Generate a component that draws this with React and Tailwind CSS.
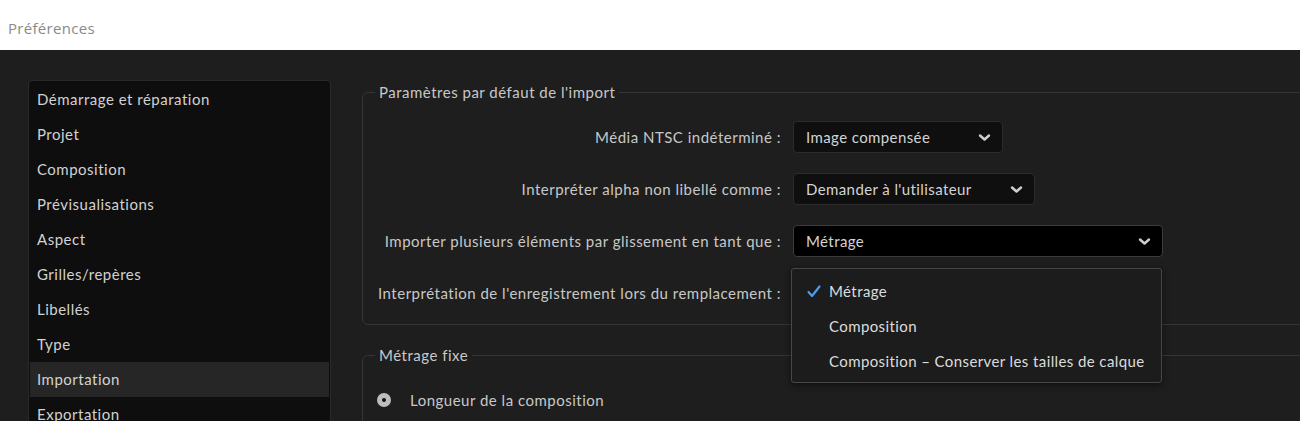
import React from "react";

const font = { fontFamily: '"Lato", "Open Sans", sans-serif' };

function Chevron() {
  return (
    <svg width="13" height="9" viewBox="0 0 13 9" className="shrink-0">
      <path d="M2 2.5 L6.5 6.5 L11 2.5" fill="none" stroke="#d0d0d0" strokeWidth="2.4" strokeLinecap="round" strokeLinejoin="round" />
    </svg>
  );
}

function Select({ value, width, active }) {
  return (
    <div
      className={
        "h-[32px] rounded-[4px] border flex items-center justify-between pl-[12px] pr-[11px] text-[15px] tracking-[0.4px] text-[#d4d4d4] " +
        (active ? "bg-black border-[#3c3c3c]" : "bg-[#0f0f0f] border-[#2c2c2c]")
      }
      style={{ width }}
    >
      <span>{value}</span>
      <Chevron />
    </div>
  );
}

const items = [
  "Démarrage et réparation",
  "Projet",
  "Composition",
  "Prévisualisations",
  "Aspect",
  "Grilles/repères",
  "Libellés",
  "Type",
  "Importation",
  "Exportation",
];

export default function App() {
  return (
    <div className="w-[1300px] h-[421px] overflow-hidden flex flex-col" style={font}>
      <div className="h-[50px] bg-white flex items-center pl-[8px] pt-[6px] shrink-0">
        <span className="text-[15px] tracking-[0.3px] text-[#8a8a8a]" style={{ fontFamily: '"Open Sans", sans-serif' }}>Préférences</span>
      </div>
      <div className="flex-1 bg-[#1e1e1e] flex pt-[30px] pl-[28px] gap-[31px]">
        <div className="w-[303px] shrink-0 h-[400px] bg-[#0e0e0e] border border-[#2a2a2a] rounded-[4px] px-[1px] pt-[0.5px]">
          {items.map((it) => (
            <div
              key={it}
              className={
                "h-[35px] flex items-center pl-[7px] text-[15px] tracking-[0.5px] text-[#d2d2d2] " +
                (it === "Importation" ? "bg-[#262626]" : "")
              }
            >
              {it}
            </div>
          ))}
        </div>
        <div className="flex-1 mr-[-40px] relative">
          <fieldset className="border border-[#353535] rounded-tl-[6px] rounded-bl-[6px] pb-[15px] pt-[19px] mt-[2px] px-0">
            <legend className="ml-[12px] px-[4px] text-[15px] tracking-[0.5px] leading-[20px] text-[#c8c8c8]">
              Paramètres par défaut de l'import
            </legend>
            <div className="flex flex-col gap-[20px]">
              {[
                ["Média NTSC indéterminé :", <Select key="a" value="Image compensée" width={210} />],
                ["Interpréter alpha non libellé comme :", <Select key="b" value="Demander à l'utilisateur" width={242} />],
                ["Importer plusieurs éléments par glissement en tant que :", <Select key="c" value="Métrage" width={370} active />],
                ["Interprétation de l'enregistrement lors du remplacement :", <div key="d" className="h-[32px]" />],
              ].map(([label, ctrl]) => (
                <div key={label} className="flex items-center h-[32px]">
                  <div className="w-[418px] shrink-0 text-right text-[15px] tracking-[0.5px] text-[#c8c8c8] whitespace-nowrap">{label}</div>
                  <div className="ml-[12px]">{ctrl}</div>
                </div>
              ))}
            </div>
          </fieldset>
          <fieldset className="mt-[20px] border border-[#353535] rounded-tl-[6px] pt-[25px] pb-[20px] px-0">
            <legend className="ml-[12px] px-[4px] text-[15px] tracking-[0.5px] leading-[20px] text-[#c8c8c8]">Métrage fixe</legend>
            <div className="flex items-center h-[20px] pl-[14px]">
              <div className="w-[14px] h-[14px] rounded-full bg-[#bdbdbd] flex items-center justify-center">
                <div className="w-[4px] h-[4px] rounded-full bg-[#111]" />
              </div>
              <span className="ml-[19px] text-[15px] tracking-[0.5px] text-[#c8c8c8]">Longueur de la composition</span>
            </div>
          </fieldset>

          <div className="absolute left-[429px] top-[188px] w-[371px] h-[115px] bg-[#1c1c1c] border border-[#474747] rounded-[3px] pt-[5px] shadow-[0_2px_6px_rgba(0,0,0,0.5)]">
            {[
              ["Métrage", true],
              ["Composition", false],
              ["Composition – Conserver les tailles de calque", false],
            ].map(([t, checked]) => (
              <div key={t} className="h-[35px] flex items-center text-[15px] tracking-[0.4px] text-[#dcdcdc]">
                <div className="w-[37px] shrink-0 flex justify-end pr-[8px]">
                  {checked && (
                    <svg width="14" height="13" viewBox="0 0 14 13">
                      <path d="M1.5 7 L5 11 L12.5 1.5" fill="none" stroke="#4b9cf0" strokeWidth="2.2" strokeLinecap="round" strokeLinejoin="round" />
                    </svg>
                  )}
                </div>
                <span>{t}</span>
              </div>
            ))}
          </div>
        </div>
      </div>
    </div>
  );
}
